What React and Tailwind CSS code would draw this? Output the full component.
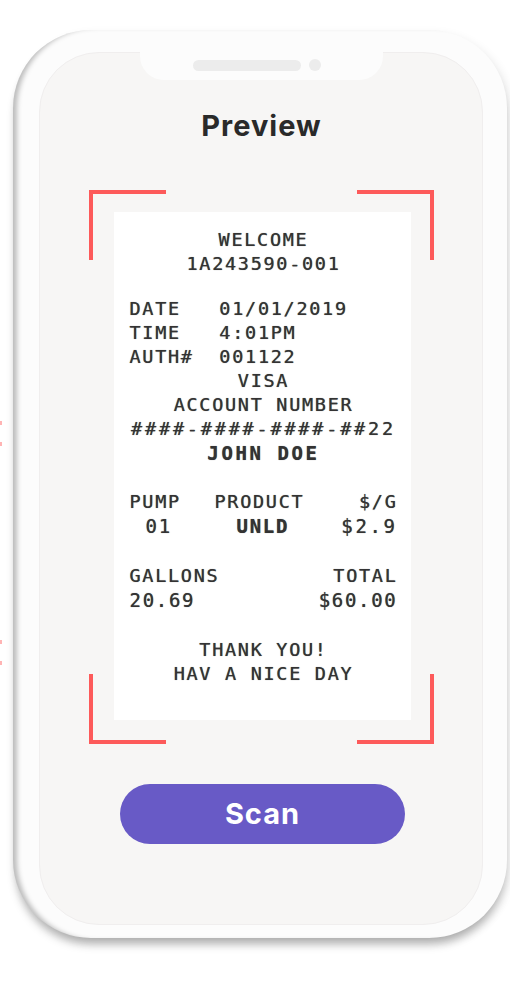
import React from "react";

const mono = { fontFamily: '"DejaVu Sans Mono", "Liberation Mono", monospace' };

function Corner({ pos }) {
  const base = "absolute bg-[#fd5a5a]";
  if (pos === "tl")
    return (
      <>
        <div className={`${base} left-0 top-0 w-[77px] h-[4px]`} />
        <div className={`${base} left-0 top-0 w-[4px] h-[70px]`} />
      </>
    );
  if (pos === "tr")
    return (
      <>
        <div className={`${base} right-0 top-0 w-[77px] h-[4px]`} />
        <div className={`${base} right-0 top-0 w-[4px] h-[70px]`} />
      </>
    );
  if (pos === "bl")
    return (
      <>
        <div className={`${base} left-0 bottom-0 w-[77px] h-[4px]`} />
        <div className={`${base} left-0 bottom-0 w-[4px] h-[70px]`} />
      </>
    );
  return (
    <>
      <div className={`${base} right-0 bottom-0 w-[77px] h-[4px]`} />
      <div className={`${base} right-0 bottom-0 w-[4px] h-[70px]`} />
    </>
  );
}

function Receipt() {
  return (
    <div
      className="w-[297px] h-[508px] bg-white pt-[16px] pl-[16px] pr-[13px] text-[18.5px] leading-[24px] tracking-[1.7px] text-[#333] whitespace-pre [text-shadow:0_0_0.7px_#555]"
      style={mono}
    >
      <div className="text-center">
        <div>WELCOME</div>
        <div>1A243590-001</div>
      </div>
      <div className="mt-[21px]">
        <div>DATE   01/01/2019</div>
        <div>TIME   4:01PM</div>
        <div>AUTH#  001122</div>
        <div className="text-center">VISA</div>
        <div className="text-center">ACCOUNT NUMBER</div>
        <div className="text-center tracking-[2.8px]">####-####-####-##22</div>
        <div className="text-center font-bold text-[19px] tracking-[2.6px]">JOHN DOE</div>
      </div>
      <div className="mt-[25px] grid grid-cols-[85px_1fr_auto]">
        <div>PUMP</div>
        <div>PRODUCT</div>
        <div className="text-right">$/G</div>
        <div className="pl-[16px] text-[19px]">01</div>
        <div className="pl-[22px] font-bold text-[19px]">UNLD</div>
        <div className="text-right text-[19px] tracking-[2.6px]">$2.9</div>
      </div>
      <div className="mt-[26px]">
        <div className="flex justify-between">
          <span>GALLONS</span>
          <span>TOTAL</span>
        </div>
        <div className="flex justify-between text-[19px]">
          <span>20.69</span>
          <span>$60.00</span>
        </div>
      </div>
      <div className="mt-[26px] text-center">
        <div>THANK YOU!</div>
        <div>HAV A NICE DAY</div>
      </div>
    </div>
  );
}

export default function App() {
  return (
    <div className="relative w-[510px] h-[982px] bg-white overflow-hidden">
      <div className="absolute left-0 top-[421px] w-[2px] h-[4px] bg-[#ffb4b4]" />
      <div className="absolute left-0 top-[442px] w-[2px] h-[4px] bg-[#ffb4b4]" />
      <div className="absolute left-0 top-[640px] w-[2px] h-[4px] bg-[#ffb4b4]" />
      <div className="absolute left-0 top-[661px] w-[2px] h-[4px] bg-[#ffb4b4]" />

      <div className="ml-[13px] mt-[30px] w-[494px] h-[908px] rounded-[78px] bg-[#fcfcfc] pt-[22px] pl-[26px] pr-[24px] pb-[13px] shadow-[inset_7px_0_5px_-3px_rgba(0,0,0,0.25),0_9px_10px_-3px_rgba(0,0,0,0.28),4px_4px_10px_rgba(0,0,0,0.08)]">
        <div className="h-full rounded-[60px] bg-[#f7f6f5] border border-[#f0eeee] flex flex-col items-center">
          <div className="-mt-px w-[243px] h-[28px] bg-[#fcfcfc] rounded-b-[24px] flex justify-center items-start gap-[8px] pt-[8px] pr-[9px]">
            <div className="w-[108px] h-[11px] rounded-full bg-[#ececec]" />
            <div className="w-[12px] h-[12px] -mt-px rounded-full bg-[#ececec]" />
          </div>

          <div
            className="mt-[28px] ml-[1px] text-[29px] leading-[35px] font-bold text-[#2a2a2a] tracking-[1px]"
            style={{ fontFamily: 'Inter, "Noto Sans", sans-serif' }}
          >
            Preview
          </div>

          <div className="relative mt-[47px] w-[345px] h-[554px] pt-[22px] pl-[25px]">
            <Corner pos="tl" />
            <Corner pos="tr" />
            <Corner pos="bl" />
            <Corner pos="br" />
            <Receipt />
          </div>

          <button
            className="mt-[40px] ml-[3px] w-[285px] h-[60px] rounded-full bg-[#685ac6] text-white text-[29px] font-bold tracking-[1px]"
            style={{ fontFamily: 'Inter, "Noto Sans", sans-serif' }}
          >
            Scan
          </button>
        </div>
      </div>
    </div>
  );
}
